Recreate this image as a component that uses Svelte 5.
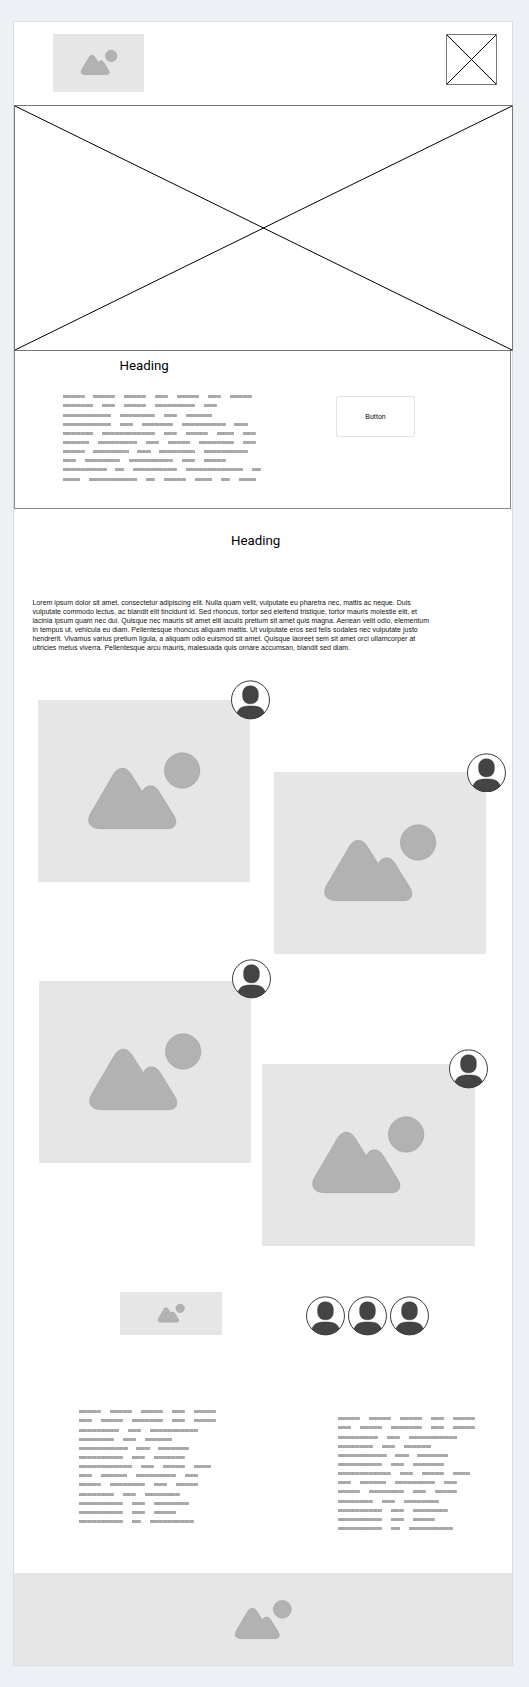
<script>
  const introLines = [
    [5, 5, 5, 3, 5, 3, 5],
    [7, 3, 5, 9, 3],
    [11, 8, 3, 6],
    [11, 3, 7, 10, 3],
    [7, 12, 3, 5, 4, 3],
    [6, 9, 3, 5, 8, 3],
    [5, 8, 3, 8, 10],
    [3, 8, 10, 3, 5],
    [10, 2, 10, 13, 2],
    [4, 11, 2, 5, 4, 2, 4]
  ];
  const columnLines = [
    [5, 5, 5, 3, 5],
    [3, 5, 7, 3, 5],
    [9, 3, 11],
    [8, 3, 6],
    [11, 3, 7],
    [10, 3, 7],
    [12, 3, 5, 4],
    [3, 6, 9, 3],
    [5, 8, 3, 5],
    [8, 3, 8],
    [10, 3, 8],
    [10, 3, 5],
    [10, 2, 10]
  ];
  const paragraph = [
    'Lorem ipsum dolor sit amet, consectetur adipiscing elit. Nulla quam velit, vulputate eu pharetra nec, mattis ac neque. Duis',
    'vulputate commodo lectus, ac blandit elit tincidunt id. Sed rhoncus, tortor sed eleifend tristique, tortor mauris molestie elit, et',
    'lacinia ipsum quam nec dui. Quisque nec mauris sit amet elit iaculis pretium sit amet quis magna. Aenean velit odio, elementum',
    'in tempus ut, vehicula eu diam. Pellentesque rhoncus aliquam mattis. Ut vulputate eros sed felis sodales nec vulputate justo',
    'hendrerit. Vivamus varius pretium ligula, a aliquam odio euismod sit amet. Quisque laoreet sem sit amet orci ullamcorper at',
    'ultricies metus viverra. Pellentesque arcu mauris, malesuada quis ornare accumsan, blandit sed diam.'
  ];
</script>

{#snippet picture(width)}
  <svg class="picture" style:width="{width}px" viewBox="174 246 337 232" aria-hidden="true">
    <path d="M212 476 C177 476 169 453 182 430 L247 319 C263 287 290 287 306 317 L337 366 C347 342 373 342 386 363 L433 439 C444 460 434 476 416 476 Z" />
    <circle cx="456.500" cy="301.500" r="53" />
  </svg>
{/snippet}

{#snippet avatar()}
  <svg class="avatar" viewBox="0 0 118 119" aria-hidden="true">
    <circle class="disc" cx="58.500" cy="59.500" r="57" />
    <path class="person" d="M58.500 17.500 C73 17.500 82 27 82 41 V47 C82 62 73 71.500 58.500 71.500 C44 71.500 35 62 35 47 V41 C35 27 44 17.500 58.500 17.500 Z" />
    <path class="person" d="M18 99 C24 82 36 78 58.500 78 C82 78 94 82 100 99 C77 122 41 122 18 99 Z" />
  </svg>
{/snippet}

{#snippet cross()}
  <svg class="cross" viewBox="0 0 100 100" preserveAspectRatio="none" aria-hidden="true">
    <path d="M0 0 L100 100 M100 0 L0 100" />
  </svg>
{/snippet}

{#snippet textBlock(lines, tall)}
  <div class="lines">
    {#each lines as line, i}
      <div class="line" class:tall={i === 1 || i === tall}>
        {#each line as n}
          <span style:width="{n * 4.41}px"></span>
        {/each}
      </div>
    {/each}
  </div>
{/snippet}

<main class="page">
  <header>
    <div class="logo fill">{@render picture(36)}</div>
    <div class="menu">{@render cross()}</div>
  </header>
  <section class="hero">{@render cross()}</section>
  <section class="intro">
    <div class="copy">
      <h2>Heading</h2>
      {@render textBlock(introLines, 8)}
    </div>
    <button>Button</button>
  </section>
  <h2 class="title">Heading</h2>
  <div class="paragraph">
    {#each paragraph as text}<div>{text}</div>{/each}
  </div>
  <section class="gallery">
    <div class="stack">
      <div class="card fill">{@render picture(112.3)}<div class="badge">{@render avatar()}</div></div>
      <div class="card fill third">{@render picture(112.3)}<div class="badge">{@render avatar()}</div></div>
    </div>
    <div class="stack right">
      <div class="card fill second">{@render picture(112.3)}<div class="badge">{@render avatar()}</div></div>
      <div class="card fill fourth">{@render picture(112.3)}<div class="badge">{@render avatar()}</div></div>
    </div>
  </section>
  <section class="social">
    <div class="small fill">{@render picture(26.5)}</div>
    <div class="people">{@render avatar()}{@render avatar()}{@render avatar()}</div>
  </section>
  <section class="columns">
    {@render textBlock(columnLines, 8)}
    <div class="lower">{@render textBlock(columnLines, 8)}</div>
  </section>
  <footer class="fill">{@render picture(56.500)}</footer>
</main>

<style>
  :global(body) {
    background: #edf1f6;
  }
  .page {
    box-sizing: border-box;
    width: 500px;
    height: 1645px;
    margin: 21px 0 0 13px;
    border: 1px solid #d9dde1;
    background: #fff;
    display: flex;
    flex-direction: column;
    font-family: "Liberation Sans", Arial, sans-serif;
    color: #000;
  }
  :global(#app) {
    display: flow-root;
    height: 1687px;
  }
  .fill {
    background: #e6e6e6;
    display: flex;
    align-items: center;
    justify-content: center;
  }
  svg {
    display: block;
    flex: none;
  }
  .picture {
    fill: #b2b2b2;
    stroke: #9c9c9c;
    overflow: visible;
  }
  .picture * {
    vector-effect: non-scaling-stroke;
    stroke-width: 0.6px;
  }
  .avatar {
    width: 39.3px;
    height: 39.7px;
  }
  .disc {
    fill: #fff;
    stroke: #222;
    stroke-width: 2.7;
  }
  .person {
    fill: #444;
    stroke: #333;
    stroke-width: 1.5;
  }
  .cross {
    width: 100%;
    height: 100%;
    overflow: visible;
  }
  .cross path {
    stroke: #000;
    stroke-width: 1px;
    fill: none;
    vector-effect: non-scaling-stroke;
  }
  header {
    height: 83px;
    flex: none;
    box-sizing: border-box;
    padding: 12px 15px 0 39.4px;
    display: flex;
    justify-content: space-between;
    align-items: flex-start;
  }
  .logo {
    width: 91px;
    height: 57.5px;
  }
  .menu {
    box-sizing: border-box;
    width: 51px;
    height: 51px;
    border: 1px solid #777;
  }
  .hero {
    box-sizing: border-box;
    height: 246px;
    flex: none;
    border: 1px solid #777;
    margin-right: -1px;
  }
  .intro {
    box-sizing: border-box;
    width: 497px;
    height: 158px;
    flex: none;
    border: 1px solid #888;
    border-top: 0;
    display: flex;
    align-items: flex-start;
  }
  .copy {
    width: 273.5px;
    padding-left: 47.5px;
  }
  h2 {
    margin: 0;
    font-family: Roboto, "Liberation Sans", sans-serif;
    font-size: 13.3px;
    line-height: 16px;
    font-weight: 400;
  }
  .copy h2 {
    padding: 7px 0 21px 57px;
  }
  button {
    width: 79px;
    height: 41px;
    margin-top: 45px;
    padding: 0;
    border: 1px solid #e2e2e2;
    border-radius: 2px;
    background: #fff;
    font: 6.9px/10px "Liberation Sans", Arial, sans-serif;
    letter-spacing: 0.1px;
    color: #000;
  }
  .lines {
    display: flex;
    flex-direction: column;
  }
  .line {
    display: flex;
    gap: 8.82px;
    height: 9px;
  }
  .line.tall {
    height: 10px;
  }
  .line span {
    height: 3px;
    background: repeating-linear-gradient(90deg, #a8a8a8 0 3.6px, #b4b4b4 3.6px 4.41px);
  }
  .title {
    margin: 24px 0 0 217px;
  }
  .paragraph {
    margin: 49px 0 0 18.5px;
    font-size: 7px;
    line-height: 9px;
    letter-spacing: 0.013px;
    white-space: nowrap;
    color: #111;
  }
  .gallery {
    margin: 48px 0 0 24px;
    display: flex;
    align-items: flex-start;
    gap: 11px;
  }
  .card {
    position: relative;
    width: 212.4px;
    height: 181.5px;
  }
  .badge {
    position: absolute;
    left: 193px;
    top: -20px;
  }
  .third {
    margin: 99.5px 0 0 1px;
  }
  .third .badge {
    top: -22px;
  }
  .second {
    margin: 72px 0 0 11.5px;
  }
  .second .badge {
    top: -19.5px;
  }
  .fourth {
    margin-top: 110.5px;
  }
  .fourth .badge {
    left: 187px;
    top: -15px;
  }
  .social {
    margin: 46.5px 0 0 106px;
    display: flex;
    align-items: flex-start;
    gap: 84px;
  }
  .small {
    width: 102px;
    height: 43px;
  }
  .people {
    display: flex;
    gap: 2.5px;
    padding-top: 4px;
  }
  .columns {
    display: flex;
    margin: 74.2px 0 0 65px;
  }
  .columns > :global(.lines) {
    width: 259px;
  }
  .lower {
    padding-top: 7px;
  }
  footer {
    height: 92px;
    flex: none;
    margin-top: auto;
  }
</style>
